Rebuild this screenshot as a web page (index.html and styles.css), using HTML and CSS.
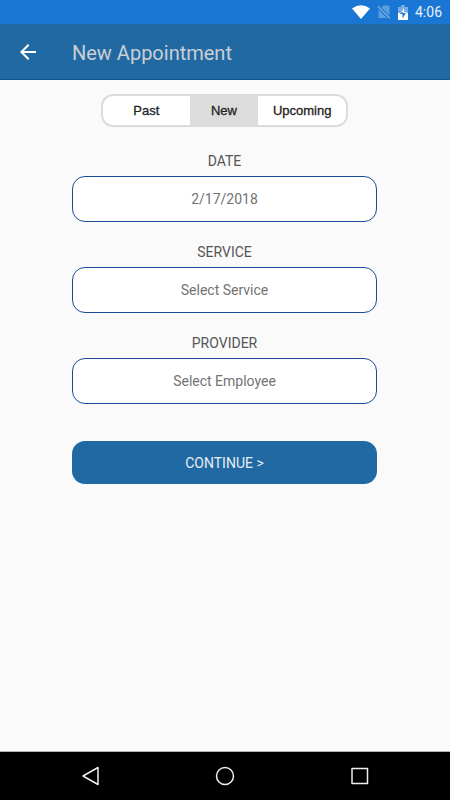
FILE: index.html
```
<!DOCTYPE html>
<html lang="en">
	<head>
		<meta charset="utf-8">
		<meta name="viewport" content="width=device-width, initial-scale=1">
		<title>New Appointment</title>
		<link rel="stylesheet" href="styles.css">
	</head>
	<body>
		<div class="status">
			<svg width="18" height="14" viewBox="0 0 18 14"><path d="M0 3.4Q9-3 18 3.4L9 14z" fill="#fff"/></svg>
			<svg width="14" height="14" viewBox="0 0 14 14"><path d="M12.500 0.500V10.500L4.500 2.500l2-2zM1.500 4.500L10 13H1.500z" fill="#5c9fe1"/><path d="M0.800 1.200l12 12" stroke="#78afe6" stroke-width="1.300"/></svg>
			<svg width="10" height="15" viewBox="0 0 10 15"><path d="M0 2h3V0h4v2h3v6H0z" fill="#75abe6"/><path d="M0 8h10v7H0z" fill="#fff"/><path d="M6 3L2 9h2.500v4.500L8.500 7H6z" fill="#1976d2"/><path d="M6 3L3 7.500h2.500V8H8.200L8.500 7H6z" fill="#fff"/></svg>
			<span class="clock">4:06</span>
		</div>
		<header class="toolbar">
			<button class="back" type="button" aria-label="Back">
				<svg width="24" height="24" viewBox="0 0 24 24"><path d="M20 11H7.830l5.590-5.590L12 4l-8 8 8 8 1.410-1.410L7.830 13H20z" fill="#fff"/></svg>
			</button>
			<h1 class="title">New Appointment</h1>
		</header>
		<main class="content">
			<nav class="tabs">
				<button class="tab past" type="button">Past</button>
				<button class="tab new" type="button">New</button>
				<button class="tab upcoming" type="button">Upcoming</button>
			</nav>
			<form class="form">
				<label for="date">DATE</label>
				<input class="field" id="date" type="text" value="2/17/2018">
				<label for="service">SERVICE</label>
				<select class="field" id="service"><option>Select Service</option></select>
				<label for="provider">PROVIDER</label>
				<select class="field" id="provider"><option>Select Employee</option></select>
				<button class="continue" type="button">CONTINUE &gt;</button>
			</form>
		</main>
		<footer class="navbar">
			<button type="button" aria-label="Back"><svg width="20" height="20" viewBox="0 0 20 20"><path d="M18 1.500v17L3 10z"/></svg></button>
			<button type="button" aria-label="Home"><svg width="20" height="20" viewBox="0 0 20 20"><circle cx="10" cy="10" r="8.500"/></svg></button>
			<button type="button" aria-label="Recent apps"><svg width="20" height="20" viewBox="0 0 20 20"><path d="M2 2.500h15.500v15H2z"/></svg></button>
		</footer>
	</body>
</html>
```
FILE: styles.css
```
*{
	box-sizing:border-box;
}
body{
	margin:0;
	min-height:100vh;
	display:flex;
	flex-direction:column;
	background:#fafafa;
	font-family:Roboto, sans-serif;
	font-size:14px;
}
button{
	font-family:inherit;
	margin:0;
	padding:0;
	border:0;
	background:none;
}
svg{
	display:block;
}
.status{
	height:24px;
	padding-right:8px;
	display:flex;
	align-items:center;
	justify-content:flex-end;
	gap:7px;
	background:#1976d2;
	color:#e8f1fa;
}
.clock{
	font-size:14px;
	line-height:24px;
}
.toolbar{
	height:56px;
	padding:1px 16px 0;
	display:flex;
	align-items:center;
	gap:32px;
	background:#2169a3;
	border-bottom:1px solid #10559a;
}
.title{
	margin:0;
	padding-top:2px;
	font-size:20px;
	font-weight:400;
	line-height:24px;
	color:#cbcfd3;
}
.content{
	flex:1;
	padding:14px 73px 24px 72px;
}
.tabs{
	display:flex;
	width:247px;
	height:33px;
	margin:0 auto;
	border:2px solid #dcdcdc;
	border-radius:12px;
	background:#fff;
	overflow:hidden;
}
.tab{
	font-family:"Liberation Sans", Arial, sans-serif;
	font-size:13px;
	color:#222;
	-webkit-text-stroke:0.3px #222;
}
.past{
	flex:87;
}
.new{
	flex:69;
	background:#dcdcdc;
}
.upcoming{
	flex:88;
}
.form{
	display:flex;
	flex-direction:column;
	margin-top:24px;
}
.form label{
	line-height:20px;
	margin-bottom:5px;
	text-align:center;
	color:#555;
}
.field{
	appearance:none;
	width:100%;
	height:46px;
	margin:0 0 20px;
	padding:0 12px;
	border:1px solid #1d4a96;
	border-radius:13px;
	background:#fff;
	font-family:inherit;
	font-size:14px;
	color:#737373;
	text-align:center;
	text-align-last:center;
}
.continue{
	height:43px;
	margin-top:17px;
	border-radius:13px;
	background:#2169a3;
	font-size:14px;
	color:#e6edf4;
}
.navbar{
	height:49px;
	display:flex;
	align-items:center;
	justify-content:center;
	gap:115px;
	background:#000;
	border-top:1px solid #b5b5b5;
}
.navbar path,
.navbar circle{
	fill:none;
	stroke:#eee;
	stroke-width:1.5;
	stroke-linejoin:round;
}
```
